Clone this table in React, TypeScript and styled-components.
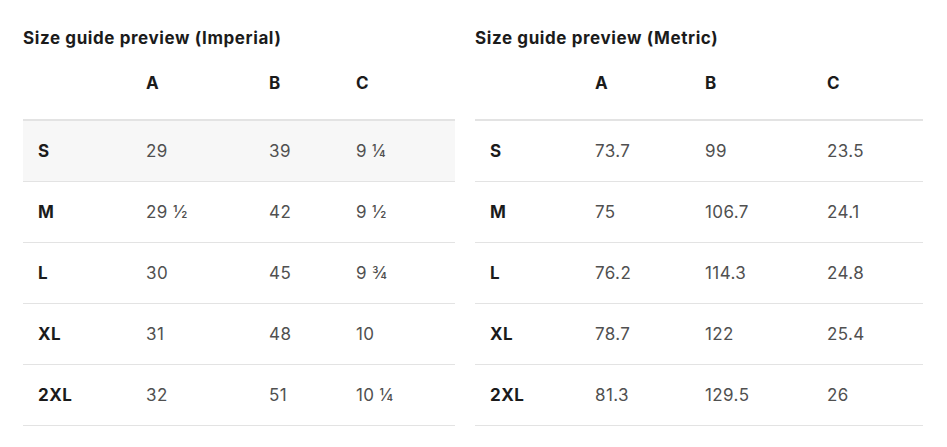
import React from "react";
import styled, { createGlobalStyle } from "styled-components";

const Global = createGlobalStyle`
  html, body { margin: 0; padding: 0; background: #ffffff; }
  body { font-family: Inter, "Open Sans", "Liberation Sans", sans-serif; }
`;

const Page = styled.div`
  display: grid;
  grid-template-columns: 432px 448px;
  column-gap: 20px;
  padding: 26px 0 0 23px;
`;

const Section = styled.section`
  display: flex;
  flex-direction: column;
`;

const Title = styled.h2`
  margin: 0;
  font-size: 17px;
  line-height: 24px;
  font-weight: 700;
  letter-spacing: 0.6px;
  color: #1b1b1b;
`;

const Table = styled.table`
  width: 100%;
  border-collapse: collapse;
  table-layout: fixed;
`;

const Col = styled.col<{ $w: number }>`
  width: ${(p) => p.$w}px;
`;

const HeadCell = styled.th`
  text-align: left;
  padding: 21px 15px 24px;
  font-size: 17px;
  line-height: 24px;
  font-weight: 700;
  color: #1b1b1b;
  border-bottom: 2px solid #e3e3e3;
`;

const Row = styled.tr<{ $active?: boolean }>`
  background: ${(p) => (p.$active ? "#f7f7f7" : "transparent")};
  border-bottom: 1px solid #e3e3e3;
`;

const SizeCell = styled.td`
  padding: 18px 15px;
  font-size: 17px;
  line-height: 24px;
  font-weight: 700;
  letter-spacing: 0.5px;
  color: #1b1b1b;
`;

const ValueCell = styled.td`
  padding: 18px 15px;
  font-size: 17px;
  line-height: 24px;
  font-weight: 400;
  letter-spacing: 0.4px;
  color: #505050;
`;

type Guide = {
  title: string;
  widths: number[];
  rows: [string, string, string, string][];
  activeRow?: number;
};

const guides: Guide[] = [
  {
    title: "Size guide preview (Imperial)",
    widths: [108, 123, 87, 114],
    activeRow: 0,
    rows: [
      ["S", "29", "39", "9 ¼"],
      ["M", "29 ½", "42", "9 ½"],
      ["L", "30", "45", "9 ¾"],
      ["XL", "31", "48", "10"],
      ["2XL", "32", "51", "10 ¼"],
    ],
  },
  {
    title: "Size guide preview (Metric)",
    widths: [105, 110, 122, 111],
    rows: [
      ["S", "73.7", "99", "23.5"],
      ["M", "75", "106.7", "24.1"],
      ["L", "76.2", "114.3", "24.8"],
      ["XL", "78.7", "122", "25.4"],
      ["2XL", "81.3", "129.5", "26"],
    ],
  },
];

function SizeTable({ guide }: { guide: Guide }) {
  return (
    <Section>
      <Title>{guide.title}</Title>
      <Table>
        <colgroup>
          {guide.widths.map((w, i) => (
            <Col key={i} $w={w} />
          ))}
        </colgroup>
        <thead>
          <tr>
            <HeadCell />
            <HeadCell>A</HeadCell>
            <HeadCell>B</HeadCell>
            <HeadCell>C</HeadCell>
          </tr>
        </thead>
        <tbody>
          {guide.rows.map((r, i) => (
            <Row key={r[0]} $active={guide.activeRow === i}>
              <SizeCell>{r[0]}</SizeCell>
              <ValueCell>{r[1]}</ValueCell>
              <ValueCell>{r[2]}</ValueCell>
              <ValueCell>{r[3]}</ValueCell>
            </Row>
          ))}
        </tbody>
      </Table>
    </Section>
  );
}

export default function App() {
  return (
    <>
      <Global />
      <Page>
        {guides.map((g) => (
          <SizeTable key={g.title} guide={g} />
        ))}
      </Page>
    </>
  );
}
